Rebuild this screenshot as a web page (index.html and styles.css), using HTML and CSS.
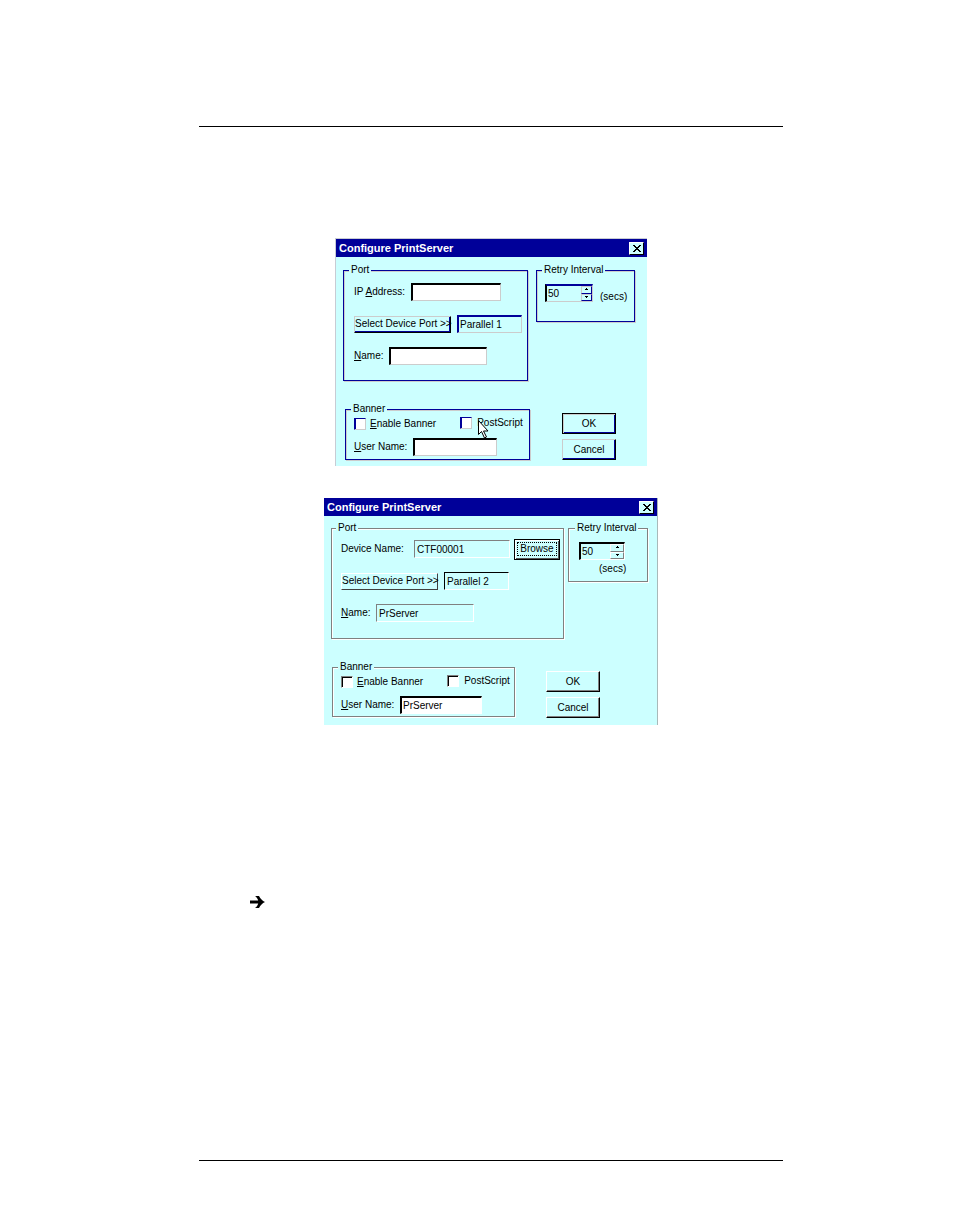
FILE: index.html
```
<!DOCTYPE html>
<html lang="en">
<head>
<meta charset="utf-8">
<title>Configure PrintServer</title>
<link rel="stylesheet" href="styles.css">
</head>
<body>
<main class="page">
  <form class="dialog dialog-navy">
    <header class="titlebar">
      <h2>Configure PrintServer</h2>
      <button type="button" class="close" aria-label="Close"><svg viewBox="0 0 8 7" width="8" height="7" shape-rendering="crispEdges"><path d="M0 0h2v1h1v1h2v-1h1v-1h2v1h-1v1h-1v1h-1v1h1v1h1v1h1v1h-2v-1h-1v-1h-2v1h-1v1h-2v-1h1v-1h1v-1h1v-1h-1v-1h-1v-1h-1z"/></svg></button>
    </header>
    <div class="top">
      <fieldset class="group port">
        <legend>Port</legend>
        <div class="row">
          <label class="label-ip" for="ip">IP <u>A</u>ddress:</label>
          <input class="field field-ip" id="ip" type="text">
        </div>
        <div class="row device">
          <button type="button" class="select-port">Select Device Port &gt;&gt;</button>
          <input class="field flat field-port" type="text" value="Parallel 1" aria-label="Device port" readonly>
        </div>
        <div class="row">
          <label class="label-name" for="name1"><u>N</u>ame:</label>
          <input class="field field-name" id="name1" type="text">
        </div>
      </fieldset>
      <fieldset class="group retry">
        <legend>Retry Interval</legend>
        <div class="spinner">
          <input type="text" id="retry1" value="50">
          <span class="arrows">
            <button type="button" aria-label="Increase"><svg viewBox="0 0 5 3" width="5" height="3" shape-rendering="crispEdges"><path d="M2 0h1v1h1v1h-3v-1h1z"/></svg></button>
            <button type="button" aria-label="Decrease"><svg viewBox="0 0 5 3" width="5" height="3" shape-rendering="crispEdges"><path d="M1 0h3v1h-1v1h-1v-1h-1z"/></svg></button>
          </span>
        </div>
        <label class="secs" for="retry1">(secs)</label>
      </fieldset>
    </div>
    <div class="bottom">
      <fieldset class="group banner">
        <legend>Banner</legend>
        <div class="checks">
          <label class="check"><input type="checkbox"><span><u>E</u>nable Banner</span></label>
          <label class="check postscript"><input type="checkbox"><span>PostScript</span>
            <svg class="pointer" viewBox="0 0 12 19" width="12" height="19"><path d="M.5 .5v14l3-3 3 6.500 2-1-3-6h4.500z" fill="#fff" stroke="#000"/></svg>
          </label>
        </div>
        <div class="row">
          <label class="label-user" for="user1"><u>U</u>ser Name:</label>
          <input class="field field-user" id="user1" type="text">
        </div>
      </fieldset>
      <div class="actions">
        <button type="submit" class="button default">OK</button>
        <button type="button" class="button">Cancel</button>
      </div>
    </div>
  </form>

  <form class="dialog dialog-gray">
    <header class="titlebar">
      <h2>Configure PrintServer</h2>
      <button type="button" class="close" aria-label="Close"><svg viewBox="0 0 8 7" width="8" height="7" shape-rendering="crispEdges"><path d="M0 0h2v1h1v1h2v-1h1v-1h2v1h-1v1h-1v1h-1v1h1v1h1v1h1v1h-2v-1h-1v-1h-2v1h-1v1h-2v-1h1v-1h1v-1h1v-1h-1v-1h-1v-1h-1z"/></svg></button>
    </header>
    <div class="top">
      <fieldset class="group port">
        <legend>Port</legend>
        <div class="row">
          <label class="label-device" for="device">Device Name:</label>
          <input class="field flat field-device" id="device" type="text" value="CTF00001" readonly>
          <button type="button" class="browse"><span>Browse</span></button>
        </div>
        <div class="row device">
          <button type="button" class="select-port">Select Device Port &gt;&gt;</button>
          <input class="field flat dark field-port" type="text" value="Parallel 2" aria-label="Device port" readonly>
        </div>
        <div class="row">
          <label class="label-name" for="name2"><u>N</u>ame:</label>
          <input class="field flat field-name" id="name2" type="text" value="PrServer" readonly>
        </div>
      </fieldset>
      <fieldset class="group retry">
        <legend>Retry Interval</legend>
        <div class="spinner">
          <input type="text" id="retry2" value="50">
          <span class="arrows">
            <button type="button" aria-label="Increase"><svg viewBox="0 0 5 3" width="5" height="3" shape-rendering="crispEdges"><path d="M2 0h1v1h1v1h-3v-1h1z"/></svg></button>
            <button type="button" aria-label="Decrease"><svg viewBox="0 0 5 3" width="5" height="3" shape-rendering="crispEdges"><path d="M1 0h3v1h-1v1h-1v-1h-1z"/></svg></button>
          </span>
        </div>
        <label class="secs" for="retry2">(secs)</label>
      </fieldset>
    </div>
    <div class="bottom">
      <fieldset class="group banner">
        <legend>Banner</legend>
        <div class="checks">
          <label class="check"><input type="checkbox"><span><u>E</u>nable Banner</span></label>
          <label class="check postscript"><input type="checkbox"><span>PostScript</span></label>
        </div>
        <div class="row">
          <label class="label-user" for="user2"><u>U</u>ser Name:</label>
          <input class="field dark field-user" id="user2" type="text" value="PrServer">
        </div>
      </fieldset>
      <div class="actions">
        <button type="submit" class="button">OK</button>
        <button type="button" class="button">Cancel</button>
      </div>
    </div>
  </form>

  <svg class="note-arrow" viewBox="0 0 15 12" width="15" height="12" role="img" aria-label="Note"><path d="M0 4.500h8.200C7.500 2.500 6.500 1 5 0h4c1.500 2.800 3.300 4.800 6 6-2.700 1.200-4.500 3.200-6 6H5c1.500-1 2.500-2.500 3.200-4.500H0z"/></svg>
</main>
</body>
</html>
```
FILE: styles.css
```
* { box-sizing: border-box; }

body {
  margin: 0;
  padding: 126px 171px 66px 199px;
  background: #fff;
  color: #000;
  font: 10px/12px "Liberation Sans", Arial, sans-serif;
}

.page {
  display: flex;
  flex-direction: column;
  align-items: center;
  min-height: calc(100vh - 192px);
  padding-top: 111px;
  border-top: 1px solid #000;
  border-bottom: 1px solid #000;
}

button, input {
  margin: 0;
  padding: 0;
  border-radius: 0;
  color: inherit;
  font: inherit;
}

.dialog {
  background: #cff;
  border: 0 solid #c8ccd4;
}

.dialog-navy {
  --line: #009;
  --light: #ccc;
  --shade: #009;
  width: 312px;
  border-width: 1px 0 0 1px;
  padding-bottom: 6px;
}

.dialog-gray {
  --line: #808080;
  --light: #fff;
  --shade: #808080;
  width: 334px;
  margin-top: 32px;
  border-right: 1px solid #a9b9b9;
  padding-bottom: 7px;
}

.titlebar {
  display: flex;
  align-items: center;
  justify-content: space-between;
  height: 18px;
  padding: 0 3px;
  background: #009;
  color: #fff;
}

.titlebar h2 {
  margin: 0;
  font-size: 11px;
  line-height: 14px;
}

.close {
  display: grid;
  place-items: center;
  width: 15px;
  height: 13px;
  background: #cff;
  border: 1px solid;
  border-color: #fff #000 #000 #fff;
}

.top, .bottom { display: flex; align-items: flex-start; }
.top { padding: 7px 0 0 7px; }
.bottom { padding: 22px 0 0 9px; }
.dialog-gray .top { padding-top: 6px; }

.group {
  margin: 0;
  min-width: 0;
  border: 1px solid var(--line);
  box-shadow: 1px 1px 0 var(--light), inset 1px 1px 0 var(--light);
}

.group legend {
  position: relative;
  margin: 0;
  padding: 0 2px;
  background: #cff;
}

.port { width: 185px; height: 117px; padding: 6px 0 0 10px; }
.port legend, .banner legend { margin-left: -5px; }

.row { display: flex; align-items: center; height: 20px; }
.port .row + .row { margin-top: 12px; }
.label-ip { width: 57px; }
.label-device { width: 73px; }
.label-name { width: 35px; }
.label-user { width: 59px; }

.field {
  height: 18px;
  padding: 0 0 0 1px;
  background: #fff;
  border: 2px solid;
  border-color: #000 var(--light) var(--light) #000;
  border-right-width: 1px;
  border-bottom-width: 1px;
}

.flat { background: #cff; border-color: var(--shade) var(--light) var(--light) var(--shade); }
.dialog-gray .flat { border-top-width: 1px; border-left-width: 1px; padding-left: 2px; }
.dialog-gray .flat.dark, .dark { border-color: #000 var(--light) var(--light) #000; }
.field-ip { width: 90px; }
.field-port { width: 65px; }
.field-name { width: 98px; }
.field-user { width: 84px; }
.field-device { width: 96px; }

.device { gap: 6px; }

.select-port {
  width: 97px;
  height: 17px;
  background: #cff;
  border: 1px solid;
  border-color: var(--light) #000 #000 var(--light);
  box-shadow: inset -1px -1px 0 var(--shade);
  white-space: nowrap;
}

.dialog-gray .select-port { border-color: #fff #404040 #404040 #fff; box-shadow: none; }

.retry {
  display: flex;
  align-items: flex-start;
  width: 99px;
  height: 58px;
  margin-left: 8px;
  padding: 8px 0 0 8px;
}

.retry legend { margin-left: -3px; }

.spinner {
  display: flex;
  width: 48px;
  height: 18px;
  border: 2px solid;
  border-color: #009 var(--light) var(--light) #000;
  border-right-width: 1px;
  border-bottom-width: 1px;
}

.dialog-gray .spinner { width: 46px; border-color: #000 #fff #fff #000; }

.spinner input {
  flex: 1;
  min-width: 0;
  padding-left: 1px;
  background: transparent;
  border: 0;
}

.arrows { display: flex; flex-direction: column; width: 11px; }
.dialog-gray .arrows { width: 14px; }

.arrows button {
  display: grid;
  place-items: center;
  flex: 1;
  min-height: 0;
  background: #cff;
  border: 1px solid;
  border-color: var(--light) var(--shade) var(--shade) var(--light);
}

.secs { margin: 7px 0 0 7px; }

.banner { width: 185px; height: 57px; padding: 2px 0 0 8px; }
.banner legend { margin-left: -3px; }
.checks { display: flex; align-items: flex-start; height: 20px; }

.check { display: flex; align-items: center; gap: 4px; height: 14px; }
.postscript { position: relative; gap: 5px; margin-left: 24px; height: 12px; }

.check input {
  appearance: none;
  width: 12px;
  height: 12px;
  background: #fff;
  border: 1px solid;
  border-color: var(--shade) var(--light) var(--light) var(--shade);
  box-shadow: inset 1px 1px 0 #000;
}

.dialog-navy .check input { box-shadow: inset 1px 0 0 #009; }

.pointer { position: absolute; left: 18px; top: 3px; }

.actions {
  display: flex;
  flex-direction: column;
  gap: 5px;
  margin: 10px 0 0 32px;
}

.button {
  width: 54px;
  height: 21px;
  background: #cff;
  border: 1px solid;
  border-color: var(--light) #000 #000 var(--light);
  box-shadow: inset -1px -1px 0 var(--shade);
}

.button.default { border-color: #000; box-shadow: inset 1px 1px 0 #ccc, inset -1px -1px 0 #009; }

.dialog-gray .port { width: 233px; padding-top: 5px; padding-left: 9px; }
.dialog-gray .retry { flex-direction: column; width: 80px; height: 60px; margin-left: 4px; padding-left: 10px; }
.dialog-gray .retry legend { margin-left: -4px; }
.dialog-gray .secs { margin: 3px 0 0 20px; }
.dialog-gray .bottom { padding: 22px 0 0 8px; }
.dialog-gray .banner { width: 183px; height: 56px; }
.dialog-gray .actions { margin-left: 31px; }
.dialog-gray .field-user { width: 82px; }

.browse {
  width: 46px;
  height: 21px;
  margin-left: 4px;
  padding: 2px;
  background: #cff;
  border: 1px solid #000;
  box-shadow: inset 1px 1px 0 #fff, inset -1px -1px 0 #555;
}

.browse span { display: block; border: 1px dotted #000; }

.note-arrow { align-self: flex-start; margin: 171px 0 0 51px; }
```
